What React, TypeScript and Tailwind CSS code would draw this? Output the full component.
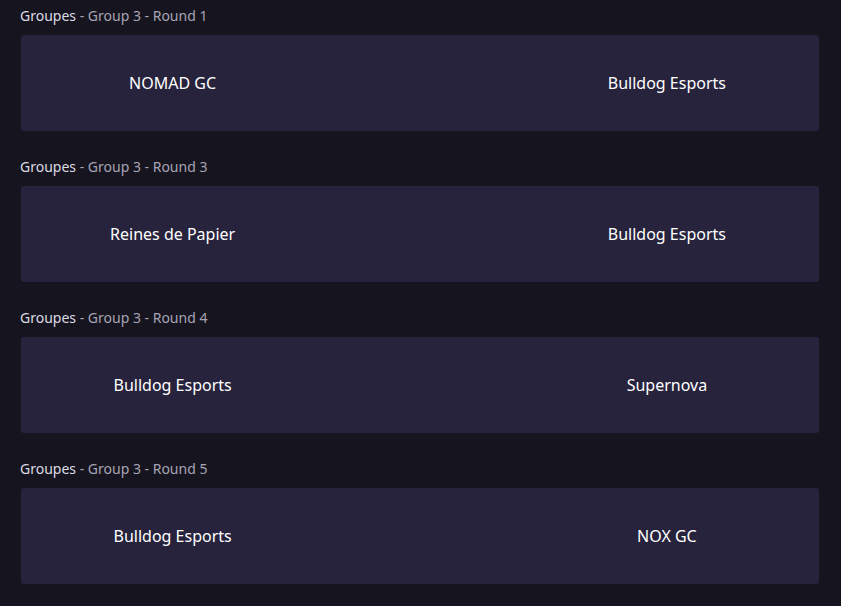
const matches = [
  { round: 1, home: "NOMAD GC", away: "Bulldog Esports" },
  { round: 3, home: "Reines de Papier", away: "Bulldog Esports" },
  { round: 4, home: "Bulldog Esports", away: "Supernova" },
  { round: 5, home: "Bulldog Esports", away: "NOX GC" },
];

const MatchCard = ({
  round,
  home,
  away,
}: {
  round: number;
  home: string;
  away: string;
}) => {
  return (
    <div className="flex flex-col">
      <p className="h-[35px] pt-[6px] pl-[20px] text-[14px] leading-[20px] text-[#a6a4b4]">
        <span className="text-[#dcdbe4]">Groupes</span> - Group 3 - Round{" "}
        {round}
      </p>
      <div className="ml-[21px] mr-[22px] h-[96px] rounded-[3px] bg-[#27233d] flex items-center">
        <div className="w-[38%] flex justify-center text-white text-[16px]">
          {home}
        </div>
        <div className="flex-1" />
        <div className="w-[38%] flex justify-center text-white text-[16px] pr-[1px]">
          {away}
        </div>
      </div>
    </div>
  );
};

export default function App() {
  return (
    <div
      className="min-h-[606px] w-full bg-[#16141f] flex flex-col gap-[20px] pb-[20px]"
      style={{ fontFamily: '"Noto Sans", "Open Sans", sans-serif' }}
    >
      {matches.map((m) => (
        <MatchCard key={m.round} {...m} />
      ))}
    </div>
  );
}
